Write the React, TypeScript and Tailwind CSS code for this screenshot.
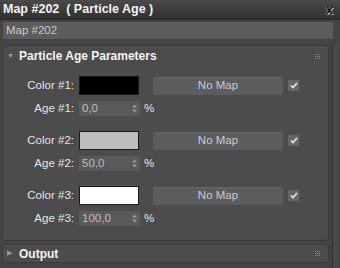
import React from 'react';

const font = { fontFamily: '"Liberation Sans", Arial, sans-serif' };

function Grip() {
  return (
    <div className="grid grid-cols-3 gap-[1px]">
      {Array.from({ length: 9 }).map((_, i) => (
        <div key={i} className="w-[1px] h-[1px] bg-[#8c8c8c]" />
      ))}
    </div>
  );
}

function Check() {
  return (
    <div className="ml-[5px] w-[11px] h-[11px] bg-[#666666] flex items-center justify-center">
      <svg width="8" height="7" viewBox="0 0 8 7">
        <path d="M1 3.5 L3 5.5 L7 1" stroke="#e8e8e8" strokeWidth="1.7" fill="none" />
      </svg>
    </div>
  );
}

function Spinner() {
  return (
    <svg width="5" height="9" viewBox="0 0 5 9" className="mr-[3px]">
      <path d="M0 3.5 L2.5 0.5 L5 3.5 Z" fill="#9a9a9a" />
      <path d="M0 5.5 L2.5 8.5 L5 5.5 Z" fill="#9a9a9a" />
    </svg>
  );
}

function ColorGroup({ n, swatch, age, last }: { n: number; swatch: string; age: string; last?: boolean }) {
  return (
    <div className={last ? '' : 'mb-[15px]'}>
      <div className="flex items-center h-[19px]">
        <div className="w-[71px] text-right text-[11.5px] text-[#e6e6e6]">Color #{n}:</div>
        <div className={`ml-[5px] w-[60px] h-[19px] border border-[#1a1a1a] ${swatch}`} />
        <div className="ml-[14px] w-[130px] h-[18px] rounded-[3px] bg-[#5d5d5d] border-t border-[#666666] flex items-center justify-center text-[11.5px] text-[#c4ccd8]">
          No Map
        </div>
        <Check />
      </div>
      <div className="flex items-center h-[15px] mt-[6px]">
        <div className="w-[71px] text-right text-[11.5px] text-[#e6e6e6]">Age #{n}:</div>
        <div className="ml-[5px] w-[61px] h-[15px] bg-[#5a5a5a] flex items-center justify-between">
          <span className="pl-[3px] text-[11.5px] text-[#bdbdbd] leading-none">{age}</span>
          <Spinner />
        </div>
        <span className="ml-[4px] text-[11.5px] text-[#e6e6e6]">%</span>
      </div>
    </div>
  );
}

export default function App() {
  return (
    <div style={font} className="w-[340px] h-[268px] bg-[#444444] flex flex-col overflow-hidden">
      <div className="h-[20px] bg-gradient-to-b from-[#4a4a4a] to-[#303030] flex items-center justify-between px-[3px] border-b border-[#2a2a2a]">
        <span className="text-[12.5px] font-bold text-[#f2f2f2] whitespace-pre">Map #202  ( Particle Age )</span>
        <span className="text-[13px] font-bold leading-none text-[#111111] mr-[4px] [text-shadow:1px_1px_0_#bdbdbd,-1px_0_0_#8a8a8a]">x</span>
      </div>
      <div className="px-[3px] pt-[2px] pr-[7px]">
        <div className="h-[17px] bg-[#5c5c5c] flex items-center pl-[3px] text-[11.5px] text-[#cacaca]">Map #202</div>
      </div>
      <div className="flex flex-1 mt-[6px] min-h-0">
        <div className="flex flex-col w-[327px] ml-[2px]">
          <div className="rounded-[3px] bg-[#4c4c4c] border border-[#3a3a3a] pb-[14px]">
            <div className="h-[20px] flex items-center justify-between pl-[4px] pr-[8px] mb-[10px]">
              <div className="flex items-center">
                <span className="text-[7px] text-[#9a9a9a] w-[12px]">▼</span>
                <span className="text-[12px] font-bold text-[#f4f4f4]">Particle Age Parameters</span>
              </div>
              <Grip />
            </div>
            <ColorGroup n={1} swatch="bg-[#000000]" age="0,0" />
            <ColorGroup n={2} swatch="bg-[#bebebe]" age="50,0" />
            <ColorGroup n={3} swatch="bg-[#ffffff]" age="100,0" last />
          </div>
          <div className="mt-[3px] h-[19px] rounded-[3px] bg-[#4c4c4c] border border-[#3a3a3a] flex items-center justify-between pl-[4px] pr-[8px]">
            <div className="flex items-center">
              <span className="text-[7px] text-[#9a9a9a] w-[12px]">▶</span>
              <span className="text-[12px] font-bold text-[#f4f4f4]">Output</span>
            </div>
            <Grip />
          </div>
        </div>
        <div className="ml-[3px] w-[1px] bg-[#2e2e2e]" />
        <div className="w-[5px] bg-[#4a4a4a]" />
      </div>
    </div>
  );
}
